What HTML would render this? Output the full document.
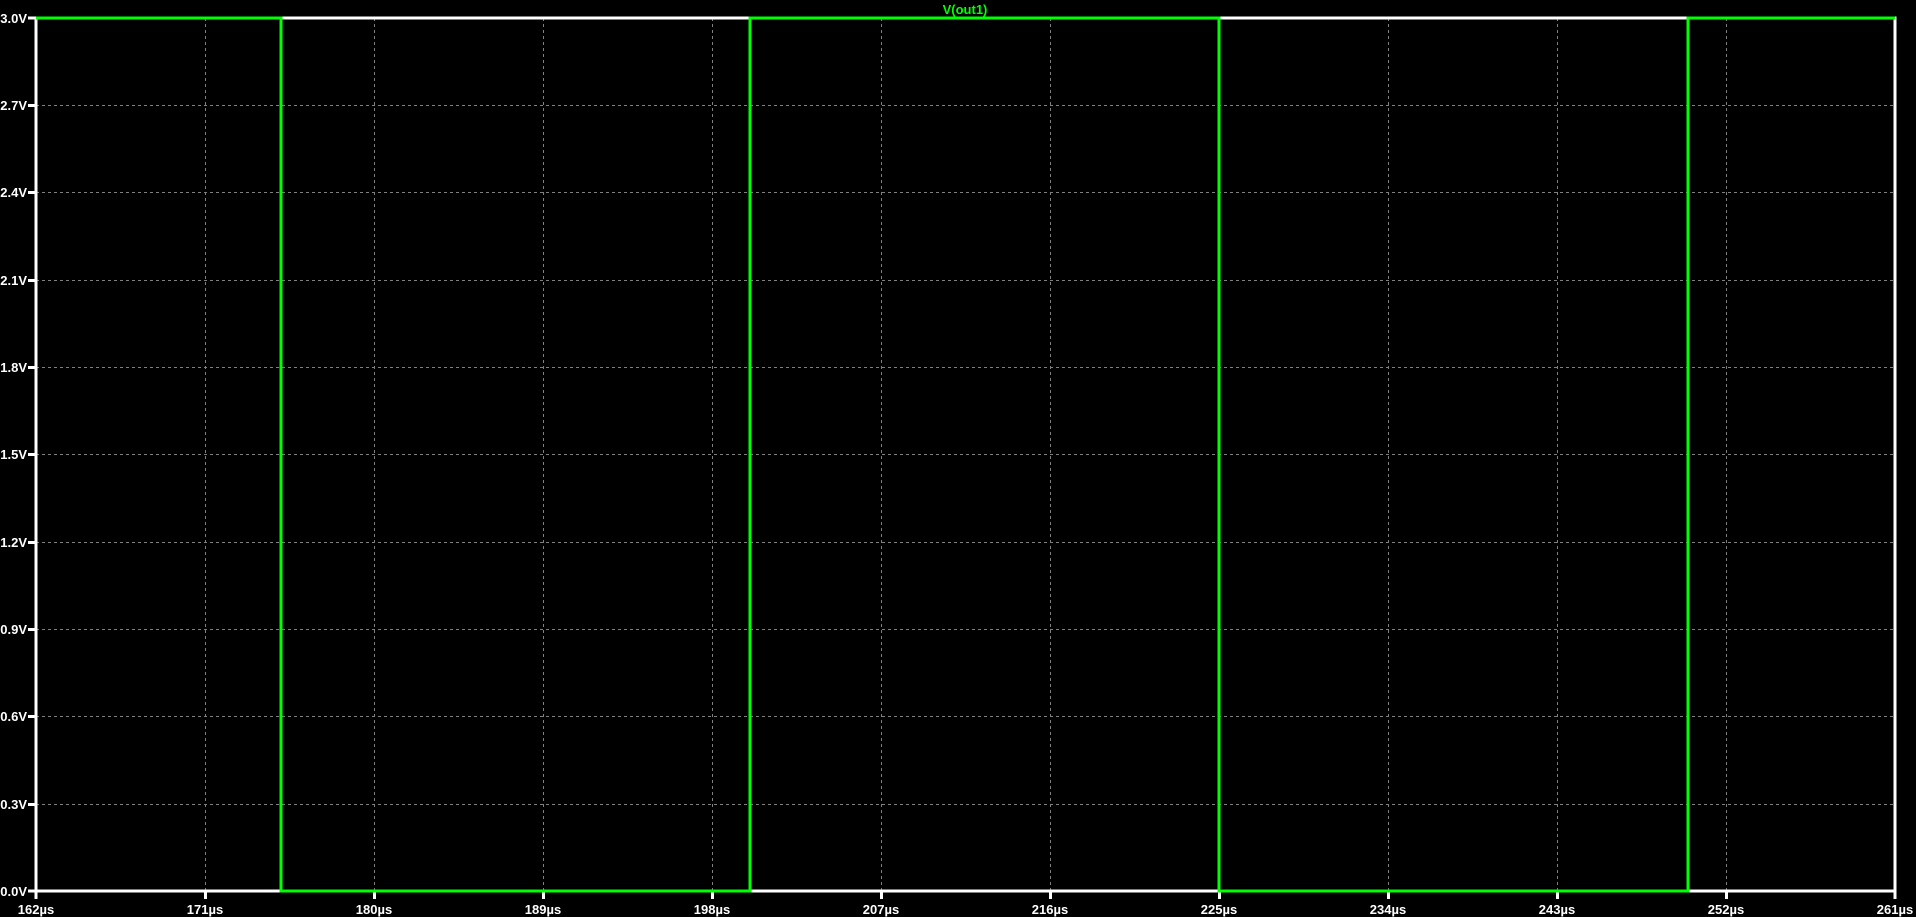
<!DOCTYPE html>
<html><head><meta charset="utf-8"><style>
html,body{margin:0;padding:0;background:#000;width:1916px;height:917px;overflow:hidden}
svg{display:block}
text{font-family:"Liberation Sans",sans-serif;font-weight:bold;font-size:13px;fill:#fff}
</style></head><body>
<svg width="1916" height="917" viewBox="0 0 1916 917">
<g stroke="#808080" stroke-width="1" stroke-dasharray="3,3" fill="none">
<path d="M205.5 18V891M374.5 18V891M543.5 18V891M712.5 18V891M881.5 18V891M1050.5 18V891M1219.5 18V891M1388.5 18V891M1557.5 18V891M1726.5 18V891"/>
<path d="M36 105.5H1895M36 192.5H1895M36 280.5H1895M36 367.5H1895M36 454.5H1895M36 542.5H1895M36 629.5H1895M36 716.5H1895M36 804.5H1895"/>
</g>
<g stroke="#fff" stroke-width="3" fill="none">
<rect x="36" y="18" width="1859" height="873"/>
<path d="M28 18H36M28 105.5H36M28 192.5H36M28 280.5H36M28 367.5H36M28 454.5H36M28 542.5H36M28 629.5H36M28 716.5H36M28 804.5H36M28 891H36"/>
<path d="M36 891v8M205.5 891v8M374.5 891v8M543.5 891v8M712.5 891v8M881.5 891v8M1050.5 891v8M1219.5 891v8M1388.5 891v8M1557.5 891v8M1726.5 891v8M1895 891v8"/>
</g>
<path d="M36 18H281V891H750V18H1219V891H1688V18H1895" stroke="#00ff00" stroke-width="3" fill="none"/>
<g text-anchor="end">
<text x="27" y="23">3.0V</text><text x="27" y="110">2.7V</text><text x="27" y="197">2.4V</text>
<text x="27" y="285">2.1V</text><text x="27" y="372">1.8V</text><text x="27" y="459">1.5V</text>
<text x="27" y="547">1.2V</text><text x="27" y="634">0.9V</text><text x="27" y="721">0.6V</text>
<text x="27" y="809">0.3V</text><text x="27" y="896">0.0V</text>
</g>
<g text-anchor="middle">
<text x="36" y="914">162µs</text><text x="205" y="914">171µs</text><text x="374" y="914">180µs</text>
<text x="543" y="914">189µs</text><text x="712" y="914">198µs</text><text x="881" y="914">207µs</text>
<text x="1050" y="914">216µs</text><text x="1219" y="914">225µs</text><text x="1388" y="914">234µs</text>
<text x="1557" y="914">243µs</text><text x="1726" y="914">252µs</text><text x="1895" y="914">261µs</text>
</g>
<text x="965" y="14" text-anchor="middle" style="fill:#00ff00">V(out1)</text>
</svg>
</body></html>
